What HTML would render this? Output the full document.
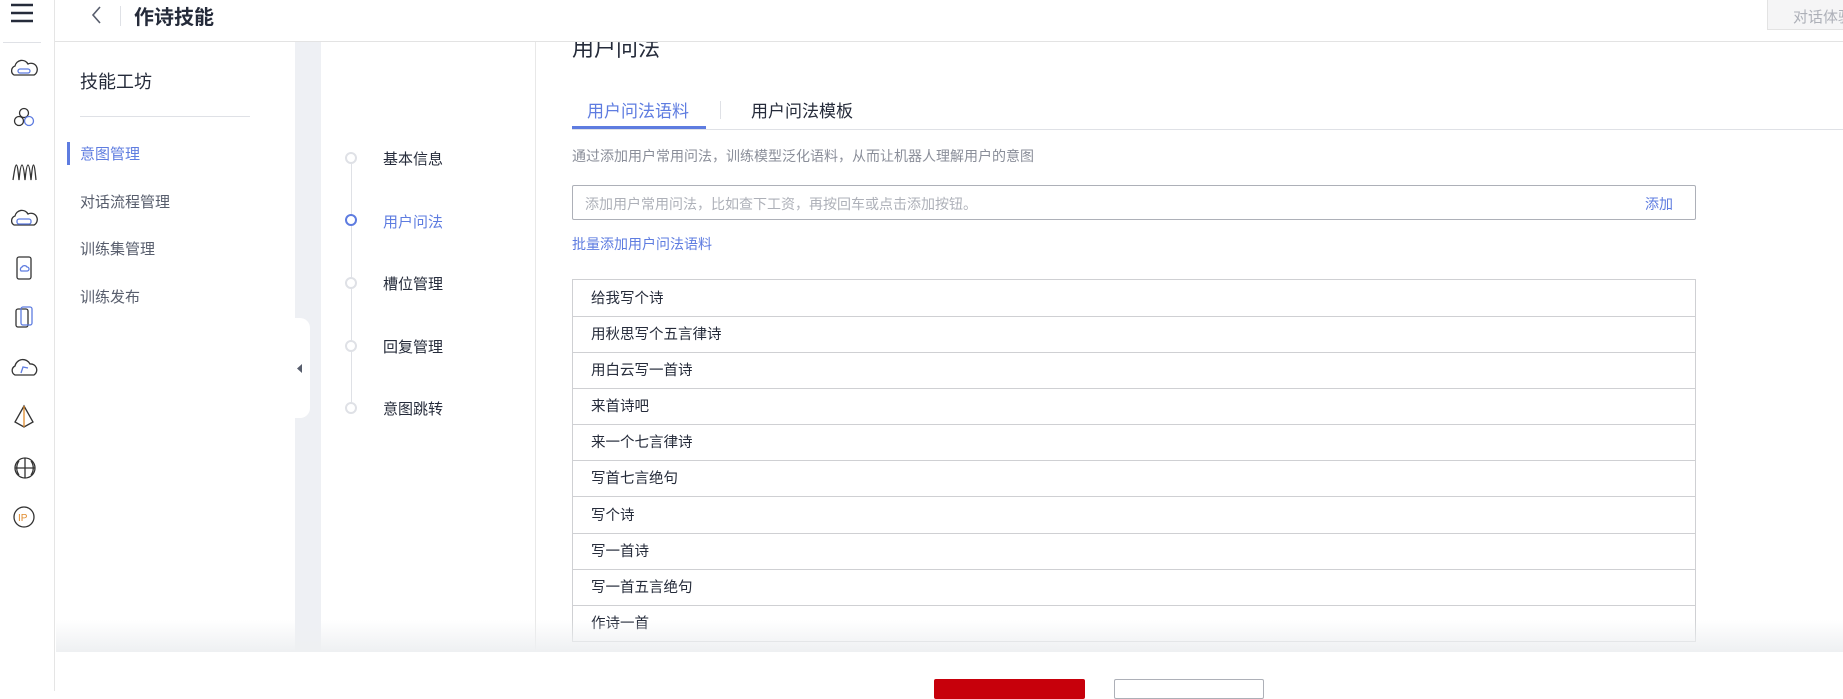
<!DOCTYPE html>
<html><head><meta charset="utf-8"><style>
*{margin:0;padding:0;box-sizing:border-box}
body{width:1843px;height:691px;overflow:hidden;background:#fff;font-family:"Liberation Sans","Noto Sans CJK SC",sans-serif;color:#252b3a;position:relative}
.a{position:absolute}
.rail{left:0;top:0;width:55px;height:691px;border-right:1px solid #e5e5e5;background:#fff}
.menu{font-size:15px;color:#575d6c}
.step{font-size:15px;color:#252b3a}
.circ{width:12px;height:12px;border:2px solid #dfe1e6;border-radius:50%;background:#fff}
.row{position:absolute;left:572px;width:1124px;height:37px;border:1px solid #cfd0d3;border-top:none;font-size:14.5px;line-height:38px;padding-left:18px;color:#252b3a}
</style></head><body>
<div class="a" style="left:572px;top:31px;font-size:22px;color:#252b3a">用户问法</div>
<div class="a" style="left:55px;top:0;width:1788px;height:41px;background:#fff"></div>
<div class="a rail"></div>
<svg class="a" style="left:11px;top:2px" width="24" height="22"><g stroke="#252b3a" stroke-width="2.4"><line x1="0" y1="3" x2="22" y2="3"/><line x1="0" y1="11" x2="22" y2="11"/><line x1="0" y1="19" x2="22" y2="19"/></g></svg>
<div class="a" style="left:3px;top:42px;width:38px;height:1px;background:#dfe1e6"></div>
<svg class="a" style="left:0;top:50px" width="55" height="490" fill="none" stroke-width="1.3">
<g transform="translate(24,20)"><path d="M-10 5a5 5 0 0 1 1-9a7 7 0 0 1 13-2a6 6 0 0 1 6 11z" stroke="#333"/><rect x="-6" y="-1" width="12" height="4" rx="2" stroke="#5e7ce0"/></g>
<g transform="translate(24,68)"><circle cx="0" cy="-5" r="4.5" stroke="#333"/><circle cx="-5" cy="3" r="4.5" stroke="#333"/><circle cx="5" cy="3" r="4.5" stroke="#5e7ce0"/></g>
<g transform="translate(24,122)"><path d="M-11 8c3-20 4-20 6 0c2-20 4-20 6 0c2-20 4-20 6 0c2-20 3-20 5 0" stroke="#333"/></g>
<g transform="translate(24,170)"><path d="M-10 5a5 5 0 0 1 1-9a7 7 0 0 1 13-2a6 6 0 0 1 6 11z" stroke="#333"/><rect x="-7" y="-1" width="14" height="5" rx="2" stroke="#5e7ce0"/></g>
<g transform="translate(24,218)"><rect x="-7" y="-11" width="14" height="22" rx="2" stroke="#333"/><path d="M-3 3a2.5 2.5 0 0 1 1-4a3 3 0 0 1 5 0a2 2 0 0 1 0 4z" stroke="#5e7ce0"/></g>
<g transform="translate(24,268)"><rect x="-8" y="-9" width="12" height="18" rx="2" stroke="#333"/><rect x="-3" y="-11" width="11" height="18" rx="2" stroke="#5e7ce0"/></g>
<g transform="translate(24,318)"><path d="M-9 7a5 5 0 0 1 0-9a8 8 0 0 1 15-2a6 6 0 0 1 4 11z" stroke="#333"/><path d="M-3 5l2-6l5 1" stroke="#5e7ce0"/></g>
<g transform="translate(24,368)"><path d="M0 -12l-9 16l9 5l9-5z" stroke="#333"/><line x1="0" y1="-12" x2="0" y2="9" stroke="#e08b2c"/></g>
<g transform="translate(25,418)"><circle r="10" stroke="#333"/><path d="M-10 0h20M0-10v20M-6-7c-3 4-3 10 0 14M6-7c3 4 3 10 0 14" stroke="#333"/></g>
<g transform="translate(24,467)"><circle r="10" stroke="#333"/><text x="-6" y="4" font-size="10" fill="#e08b2c" stroke="none" font-family="Liberation Sans">IP</text></g>
</svg>
<div class="a" style="left:55px;top:41px;width:1788px;height:1px;background:#e3e3e3"></div>
<svg class="a" style="left:90px;top:5px" width="14" height="20"><path d="M10 2L3 10l7 8" stroke="#575d6c" stroke-width="1.6" fill="none"/></svg>
<div class="a" style="left:120px;top:6px;width:1px;height:20px;background:#dfe1e6"></div>
<div class="a" style="left:134px;top:1px;font-size:20px;font-weight:bold;color:#252b3a">作诗技能</div>
<div class="a" style="left:1767px;top:0;width:80px;height:30px;background:#f5f5f6;border:1px solid #e3e3e3;border-top:none;font-size:15px;color:#adb0b8;padding:6px 0 0 25px;white-space:nowrap;overflow:hidden">对话体验</div>
<div class="a" style="left:80px;top:68px;font-size:18px;color:#252b3a">技能工坊</div>
<div class="a" style="left:80px;top:116px;width:170px;height:1px;background:#dfe1e6"></div>
<div class="a" style="left:67px;top:142px;width:3px;height:23px;background:#5e7ce0"></div>
<div class="a menu" style="left:80px;top:143px;color:#5e7ce0">意图管理</div>
<div class="a menu" style="left:80px;top:191px">对话流程管理</div>
<div class="a menu" style="left:80px;top:238px">训练集管理</div>
<div class="a menu" style="left:80px;top:286px">训练发布</div>
<div class="a" style="left:295px;top:42px;width:26px;height:610px;background:#eef0f4"></div>
<div class="a" style="left:295px;top:318px;width:15px;height:100px;background:#fff;border-radius:0 10px 10px 0"></div>
<svg class="a" style="left:296px;top:363px" width="8" height="12"><path d="M6 1v9L1 5.5z" fill="#575d6c"/></svg>
<div class="a" style="left:535px;top:42px;width:1px;height:610px;background:#e8e8e8"></div>
<div class="a" style="left:351px;top:157px;width:1px;height:250px;background:#dfe1e6"></div>
<div class="a circ" style="left:345px;top:152px"></div>
<div class="a circ" style="left:345px;top:214px;border-color:#5e7ce0"></div>
<div class="a circ" style="left:345px;top:277px"></div>
<div class="a circ" style="left:345px;top:340px"></div>
<div class="a circ" style="left:345px;top:402px"></div>
<div class="a step" style="left:383px;top:148px">基本信息</div>
<div class="a step" style="left:383px;top:211px;color:#5e7ce0">用户问法</div>
<div class="a step" style="left:383px;top:273px">槽位管理</div>
<div class="a step" style="left:383px;top:336px">回复管理</div>
<div class="a step" style="left:383px;top:398px">意图跳转</div>
<div class="a" style="left:587px;top:97px;font-size:17px;color:#5e7ce0">用户问法语料</div>
<div class="a" style="left:720px;top:101px;width:1px;height:18px;background:#dfe1e6"></div>
<div class="a" style="left:751px;top:97px;font-size:17px;color:#252b3a">用户问法模板</div>
<div class="a" style="left:572px;top:129px;width:1271px;height:1px;background:#dfe1e6"></div>
<div class="a" style="left:572px;top:126px;width:134px;height:3px;background:#5e7ce0"></div>
<div class="a" style="left:572px;top:146px;font-size:14px;color:#8a8e99">通过添加用户常用问法，训练模型泛化语料，从而让机器人理解用户的意图</div>
<div class="a" style="left:572px;top:185px;width:1124px;height:35px;border:1px solid #adb0b8;border-radius:2px"></div>
<div class="a" style="left:585px;top:194px;font-size:14px;color:#adb0b8">添加用户常用问法，比如查下工资，再按回车或点击添加按钮。</div>
<div class="a" style="left:1645px;top:194px;font-size:14px;color:#5e7ce0">添加</div>
<div class="a" style="left:572px;top:234px;font-size:14px;color:#5e7ce0">批量添加用户问法语料</div>
<div class="a" style="left:572px;top:279px;width:1124px;height:1px;background:#cfd0d3"></div>
<div class="row" style="top:280px">给我写个诗</div>
<div class="row" style="top:316px">用秋思写个五言律诗</div>
<div class="row" style="top:352px">用白云写一首诗</div>
<div class="row" style="top:388px">来首诗吧</div>
<div class="row" style="top:424px">来一个七言律诗</div>
<div class="row" style="top:460px">写首七言绝句</div>
<div class="row" style="top:497px">写个诗</div>
<div class="row" style="top:533px">写一首诗</div>
<div class="row" style="top:569px">写一首五言绝句</div>
<div class="row" style="top:605px">作诗一首</div>
<div class="a" style="left:56px;top:620px;width:1787px;height:32px;background:linear-gradient(rgba(240,241,243,0),#eef0f2)"></div>
<div class="a" style="left:56px;top:652px;width:1787px;height:39px;background:#fff"></div>
<div class="a" style="left:934px;top:679px;width:151px;height:20px;background:#c7000b;border-radius:2px"></div>
<div class="a" style="left:1114px;top:679px;width:150px;height:20px;background:#fff;border:1px solid #adb0b8;border-radius:2px"></div>
</body></html>
